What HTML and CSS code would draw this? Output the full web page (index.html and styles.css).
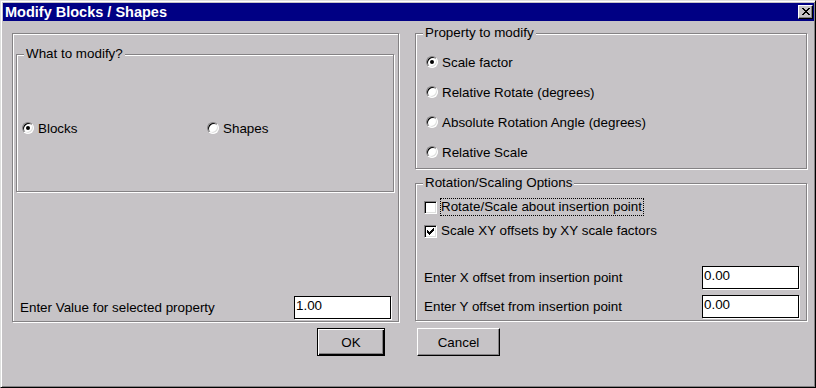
FILE: index.html
```html
<!DOCTYPE html>
<html lang="en">
<head>
    <meta charset="UTF-8">
    <title>Modify Blocks / Shapes</title>
    <link rel="stylesheet" href="styles.css">
</head>
<body>
    <div class="window">
        <div class="titlebar">
            <span class="title">Modify Blocks / Shapes</span>
            <button class="close-btn" aria-label="Close">
                <svg width="8" height="7" viewBox="0 0 8 7" shape-rendering="crispEdges">
                    <path fill="#000" d="M0 0h2v1h-2z M6 0h2v1h-2z M1 1h2v1h-2z M5 1h2v1h-2z M2 2h4v1h-4z M3 3h2v1h-2z M2 4h4v1h-4z M1 5h2v1h-2z M5 5h2v1h-2z M0 6h2v1h-2z M6 6h2v1h-2z"/>
                </svg>
            </button>
        </div>

        <div class="dialog-body">
            <div class="columns">
                <!-- left side -->
                <div class="frame">
                    <div class="group what-group">
                        <span class="group-label">What to modify?</span>
                        <div class="choice-row">
                            <label class="option blocks"><span class="radio checked"></span>Blocks</label>
                            <label class="option"><span class="radio"></span>Shapes</label>
                        </div>
                    </div>
                    <div class="field-row value-row">
                        <span>Enter Value for selected property</span>
                        <input class="edit" type="text" value="1.00">
                    </div>
                </div>

                <!-- right side -->
                <div class="right-col">
                    <div class="group property-group">
                        <span class="group-label">Property to modify</span>
                        <label class="option prop"><span class="radio checked"></span>Scale factor</label>
                        <label class="option prop"><span class="radio"></span>Relative Rotate (degrees)</label>
                        <label class="option prop"><span class="radio"></span>Absolute Rotation Angle (degrees)</label>
                        <label class="option prop"><span class="radio"></span>Relative Scale</label>
                    </div>

                    <div class="group options-group">
                        <span class="group-label">Rotation/Scaling Options</span>
                        <label class="check-row">
                            <span class="checkbox"></span>
                            <span class="check-text focus">Rotate/Scale about insertion point</span>
                        </label>
                        <label class="check-row">
                            <span class="checkbox">
                                <svg width="7" height="7" viewBox="0 0 7 7" shape-rendering="crispEdges">
                                    <path fill="#000" d="M6 0h1v1h-1z M5 1h2v1h-2z M0 2h1v1h-1z M4 2h3v1h-3z M0 3h2v1h-2z M3 3h3v1h-3z M0 4h5v1h-5z M1 5h3v1h-3z M2 6h1v1h-1z"/>
                                </svg>
                            </span>
                            <span class="check-text">Scale XY offsets by XY scale factors</span>
                        </label>
                        <div class="field-row offset-row offset-first">
                            <span>Enter X offset from insertion point</span>
                            <input class="edit" type="text" value="0.00">
                        </div>
                        <div class="field-row offset-row">
                            <span>Enter Y offset from insertion point</span>
                            <input class="edit" type="text" value="0.00">
                        </div>
                    </div>
                </div>
            </div>

            <div class="buttons">
                <button class="btn btn-ok">OK</button>
                <button class="btn btn-cancel">Cancel</button>
            </div>
        </div>
    </div>
</body>
</html>
```

FILE: styles.css
```css
* {
    box-sizing: border-box;
}

body {
    margin: 0;
    font-family: 'Liberation Sans', Arial, sans-serif;
    font-size: 13.4px;
    color: #000;
    background: #c6c3c6;
}

.window {
    width: 816px;
    height: 388px;
    padding: 2px 1px 2px 2px;
    background: #c6c3c6;
    border: 1px solid;
    border-color: #dedfde #000 #000 #dedfde;
    box-shadow: inset 1px 1px 0 #fff, inset -1px -1px 0 #848284;
}

.titlebar {
    height: 18px;
    padding-left: 2px;
    display: flex;
    align-items: center;
    justify-content: space-between;
    background: #000084;
    color: #fff;
}

.title {
    font-weight: bold;
    font-size: 14.5px;
    line-height: 18px;
}

.close-btn {
    width: 15px;
    height: 14px;
    margin-right: 1px;
    padding: 0 0 1px 0;
    display: flex;
    align-items: center;
    justify-content: center;
    background: #c6c3c6;
    border: 1px solid;
    border-color: #fff #000 #000 #fff;
    box-shadow: inset -1px -1px 0 #848284;
}

.dialog-body {
    padding: 12px 0 0 9px;
}

.columns {
    display: flex;
    gap: 16px;
}

/* etched frames */
.frame,
.group {
    border: 1px solid #848284;
    box-shadow: inset 1px 1px 0 #fff, 1px 1px 0 #fff;
}

.frame {
    width: 387px;
    height: 289px;
    padding: 20px 4px 2px 3px;
    display: flex;
    flex-direction: column;
}

.group {
    position: relative;
}

.group-label {
    position: absolute;
    top: -9px;
    left: 7px;
    padding: 0 2px;
    line-height: 16px;
    white-space: nowrap;
    background: #c6c3c6;
}

.what-group {
    width: 378px;
    height: 138px;
}

.choice-row {
    display: flex;
    padding: 65px 0 0 5px;
}

.option {
    display: flex;
    align-items: center;
    gap: 4px;
    height: 16px;
    white-space: nowrap;
}

.blocks {
    width: 185px;
}

.radio {
    position: relative;
    flex: none;
    width: 12px;
    height: 12px;
    border-radius: 50%;
    background: #fff;
    border: 1px solid;
    border-color: #848284 #fff #fff #848284;
    box-shadow: inset 1px 1px 0 #000, inset -1px -1px 0 #dedfde;
}

.radio.checked::after {
    content: "";
    position: absolute;
    left: 3px;
    top: 3px;
    width: 4px;
    height: 4px;
    border-radius: 50%;
    background: #000;
}

.field-row {
    display: flex;
    align-items: center;
    justify-content: space-between;
    height: 23px;
}

.value-row {
    margin-top: auto;
    padding: 0 3px 0 4px;
}

.edit {
    width: 97px;
    height: 23px;
    padding: 1px 1px 5px 1px;
    font: inherit;
    color: #000;
    background: #fff;
    border: 1px solid #000;
    box-shadow: 1px 1px 0 #fff;
    outline: none;
}

.right-col {
    width: 392px;
    display: flex;
    flex-direction: column;
    gap: 14px;
}

.property-group {
    height: 136px;
    padding: 13px 0 0 10px;
}

.prop {
    height: 30px;
}

.options-group {
    height: 138px;
    padding: 11px 7px 2px 8px;
    display: flex;
    flex-direction: column;
}

.check-row {
    display: flex;
    align-items: center;
    height: 24px;
}

.checkbox {
    flex: none;
    width: 13px;
    height: 13px;
    margin-right: 3px;
    display: flex;
    align-items: center;
    justify-content: center;
    background: #fff;
    border: 1px solid;
    border-color: #848284 #fff #fff #848284;
    box-shadow: inset 1px 1px 0 #000, inset -1px -1px 0 #dedfde;
}

.check-text {
    padding-right: 1px;
    line-height: 16px;
    white-space: nowrap;
    border: 1px solid transparent;
}

.check-text.focus {
    border: 1px dotted #000;
}

.offset-first {
    margin-top: auto;
}

.offset-row + .offset-row {
    margin-top: 6px;
}

.buttons {
    display: flex;
    gap: 32px;
    margin-top: 6px;
    padding-left: 305px;
}

.btn {
    height: 28px;
    padding: 0;
    font: inherit;
    color: #000;
    background: #c6c3c6;
    border: 1px solid;
    border-color: #fff #000 #000 #fff;
    box-shadow: inset -1px -1px 0 #848284;
}

.btn-ok {
    width: 68px;
    border-color: #000;
    box-shadow: inset 1px 1px 0 #fff, inset -1px -1px 0 #000, inset -2px -2px 0 #848284;
}

.btn-cancel {
    width: 83px;
}
```
